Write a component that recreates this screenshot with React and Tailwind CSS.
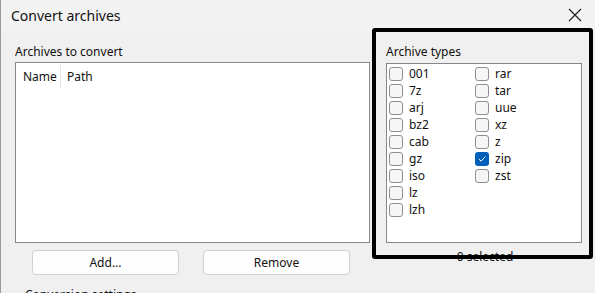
import React from "react";

const left = ["001", "7z", "arj", "bz2", "cab", "gz", "iso", "lz", "lzh"];
const right = ["rar", "tar", "uue", "xz", "z", "zip", "zst"];

function Check({ label, checked }) {
  return (
    <div className="flex items-center h-[17px]">
      {checked ? (
        <div className="w-[14px] h-[14px] rounded-[3px] bg-[#005fb8] flex items-center justify-center">
          <svg width="10" height="10" viewBox="0 0 10 10" fill="none">
            <path d="M2 5.2 L4.1 7.2 L8 2.9" stroke="white" strokeWidth="1" strokeLinecap="round" strokeLinejoin="round" />
          </svg>
        </div>
      ) : (
        <div className="w-[14px] h-[14px] rounded-[3px] border border-[#8f8f8f] bg-[#f6f6f6]" />
      )}
      <span className="ml-[6px] text-[12px] leading-[17px] text-[#111]">{label}</span>
    </div>
  );
}

export default function App() {
  return (
    <div
      className="relative w-[595px] h-[293px] overflow-hidden bg-[#f0f0f0] border-l border-[#9a9a9a]"
      style={{ fontFamily: '"Noto Sans", "Open Sans", sans-serif' }}
    >
      <div className="h-[32px] bg-[#f3f3f3] flex items-center justify-between pl-[10px] pr-[13px]">
        <span className="text-[14px] text-[#111] mb-[2px]">Convert archives</span>
        <svg width="14" height="14" viewBox="0 0 14 14" className="mb-[3px]">
          <path d="M1 1 L13 13 M13 1 L1 13" stroke="#1a1a1a" strokeWidth="1.1" />
        </svg>
      </div>
      <div className="flex pl-[14px] pt-[12px]">
        <div className="w-[355px] flex flex-col">
          <div className="h-[16px] text-[12px] leading-[16px] text-[#111]">Archives to convert</div>
          <div className="mt-[2px] h-[181px] bg-white border border-[#828790] flex flex-col">
            <div className="flex h-[24px] mt-[2px] text-[12px] text-[#111]">
              <div className="w-[45px] pl-[7px] flex items-center border-r border-[#e5e5e5]">Name</div>
              <div className="pl-[6px] flex items-center">Path</div>
            </div>
          </div>
          <div className="flex mt-[7px] pl-[17px] gap-[24px]">
            <button className="w-[147px] h-[25px] rounded-[4px] border border-[#d0d0d0] bg-[#fdfdfd] text-[12px] text-[#111]">Add...</button>
            <button className="w-[147px] h-[25px] rounded-[4px] border border-[#d0d0d0] bg-[#fdfdfd] text-[12px] text-[#111]">Remove</button>
          </div>
          <div className="mt-[12px] pl-[10px] text-[12px] leading-[16px] text-[#111]">Conversion settings</div>
        </div>
        <div className="ml-[16px] w-[196px] flex flex-col">
          <div className="h-[16px] text-[12px] leading-[16px] text-[#111]">Archive types</div>
          <div className="mt-[3px] h-[180px] bg-white border border-[#828790] pl-[2px] pt-[1px] flex">
            <div className="w-[86px] flex flex-col">
              {left.map((l) => (
                <Check key={l} label={l} />
              ))}
            </div>
            <div className="flex flex-col">
              {right.map((r) => (
                <Check key={r} label={r} checked={r === "zip"} />
              ))}
            </div>
          </div>
          <div className="mt-[6px] text-center pl-[2px] text-[12px] leading-[16px] text-[#111]">0 selected</div>
        </div>
      </div>
      <div className="absolute left-[371px] top-[28px] w-[221px] h-[231px] border-[4px] border-black rounded-[3px] pointer-events-none" />
    </div>
  );
}
